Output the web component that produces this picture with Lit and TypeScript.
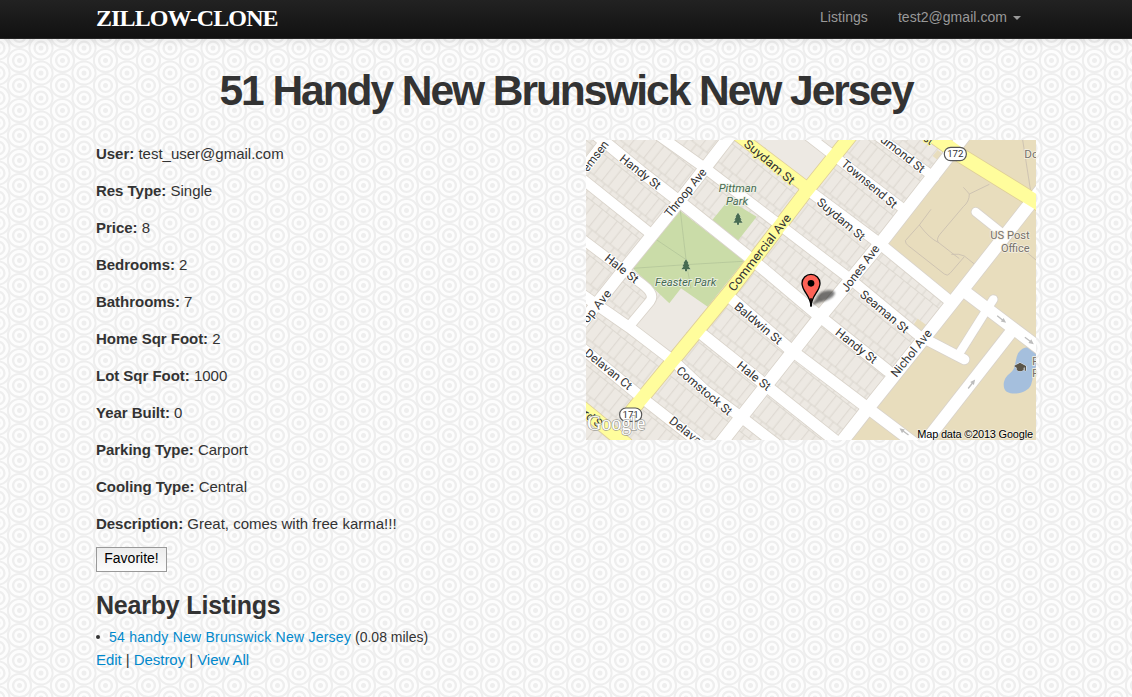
import { LitElement, html, svg, css } from "lit";
import { customElement } from "lit/decorators.js";

type Label = [string, number, number, number, number, string?];

// Street geometry on a 1350 x 900 canvas: [path, width, colour]
const streets: [string, number, string][] = [
  ["M70,-20 L-20,98", 24, "#fff"],
  ["M430,-10 L257,213 L117,385 L-10,545", 36, "#fff"],
  ["M1133,-10 L885,308 L705,527 L540,737 L400,915", 38, "#fff"],
  ["M1370,143 L1125,455 L1030,575 L850,800 L762,912", 38, "#fff"],
  ["M1272,580 L1010,915", 36, "#fff"],
  ["M1222,478 L1120,640", 25, "#fff"],
  ["M650,-25 L752,54 L950,205", 28, "#fff"],
  ["M850,-30 L1045,112", 28, "#fff"],
  ["M655,142 L870,302 L1090,482", 32, "#fff"],
  ["M1130,450 L1370,632", 36, "#fff"],
  ["M210,-20 L365,90 L590,262 L790,415 L1000,588 L1135,658", 30, "#fff"],
  ["M25,-20 L165,95 L290,192 L490,352 L690,520 L905,692", 34, "#fff"],
  ["M-10,118 L190,278", 30, "#fff"],
  ["M430,470 L610,626 L840,800 L985,910", 34, "#fff"],
  ["M-10,298 L105,385 L168,432 Q208,462 192,484 L132,556", 28, "#fff"],
  ["M345,580 L505,708 L550,745 L760,912", 34, "#fff"],
  ["M-10,465 L130,562 L265,665 L355,750 L470,835 L570,912", 32, "#fff"],
  ["M-10,626 L170,775 L345,912", 32, "#fff"],
  ["M1169,216 L1262,290", 25, "#fff"],
  ["M445,-22 L665,145", 34, "#fffd9c"],
  ["M800,-20 L660,155 L437,447 L135,815", 39, "#fffd9c"],
  ["M-20,797 L120,912", 40, "#fffd9c"],
  ["M1000,-42 L1130,50 L1370,198", 42, "#fffd9c"],
];

const labels: Label[] = [
  ["emsen", 28, 48, -52, 106],
  ["Handy St", 163, 96, 38, 145],
  ["Throop Ave", 299, 158, -51, 176],
  ["Suydam St", 550, 66, 40, 186],
  ["Townsend St", 850, 132, 40, 205],
  ["dmond St", 950, 42, 38, 158],
  ["Suydam St", 765, 238, 40, 176],
  ["Commercial Ave", 521, 338, -52, 282],
  ["Jones Ave", 823, 385, -53, 166],
  ["Seaman St", 895, 515, 40, 178],
  ["Handy St", 811, 618, 38, 147],
  ["Nichol Ave", 976, 640, -51, 172],
  ["Hale St", 107, 386, 38, 118],
  ["op Ave", 32, 499, -51, 116],
  ["Baldwin St", 517, 550, 40, 175],
  ["Hale St", 504, 708, 38, 118],
  ["Comstock St", 355, 753, 40, 206],
  ["Delavan Ct", 67, 688, 39, 172],
  ["Delava", 298, 872, 38, 112],
  ["rd S", 20, 836, 38, 62],
  ["st", 1028, -2, 34, 26],
];

const parcels = [
  "M1210,133 L1150,162 Q1140,150 1132,142 M1150,162 Q1150,185 1132,200 L1060,285 Q1050,300 1058,308",
  "M1035,208 L1000,255 L958,302 Q958,312 968,318 L1075,402 Q1084,410 1092,400 L1135,350 M1000,255 Q1030,295 1058,308 L1120,356 M1096,343 Q1120,340 1135,348 L1165,372",
  "M1310,0 L1335,160 M1290,310 L1350,360",
];

@customElement("street-map")
class StreetMap extends LitElement {
  static styles = css`
    :host { display: block; width: 450px; height: 300px; }
    svg { display: block; width: 100%; height: 100%; }
    .street { font-family: Roboto, sans-serif; font-size: 36px; fill: #333; stroke: #fff; stroke-width: 6px; stroke-linejoin: round; paint-order: stroke; text-anchor: middle; }
    .onyellow { stroke: #fffd9c; }
    .park { font-family: Roboto, sans-serif; font-style: italic; font-size: 35px; fill: #476b52; stroke: #eef2e6; stroke-width: 5px; paint-order: stroke; text-anchor: middle; }
    .place { font-family: Roboto, sans-serif; font-size: 35px; fill: #77726b; stroke: #f5f0e3; stroke-width: 5px; paint-order: stroke; text-anchor: end; }
    .shield { font-family: Roboto, sans-serif; font-size: 29px; fill: #333; text-anchor: middle; }
    .logo { font-family: "Liberation Serif", serif; font-size: 60px; fill: #fff; stroke: #8b8b85; stroke-opacity: .8; stroke-width: 4px; paint-order: stroke; }
    .credit { font-family: "Liberation Sans", sans-serif; font-size: 33px; fill: #000; stroke: #fff; stroke-opacity: .5; stroke-width: 5px; paint-order: stroke; text-anchor: end; }
  `;

  private road([d, w, c]: [string, number, string]) {
    return svg`<path d=${d} stroke=${c} stroke-width=${w} />`;
  }
  private casing([d, w, c]: [string, number, string]) {
    return svg`<path d=${d} stroke=${c === "#fff" ? "#d9d3ca" : "#dfcf9a"} stroke-width=${w + 5} />`;
  }
  private label([t, x, y, a, len]: Label) {
    const yellow = (t === "Suydam St" && y < 100) || t === "Commercial Ave" || t === "rd S" || t === "st";
    return svg`<text class=${yellow ? "street onyellow" : "street"} transform="translate(${x} ${y}) rotate(${a})" y="12" textLength=${len} lengthAdjust="spacingAndGlyphs">${t}</text>`;
  }
  private tree(x: number, y: number) {
    return svg`<path transform="translate(${x} ${y})" fill="#476b52" stroke="#dfe9cd" stroke-width="2" paint-order="stroke" d="M0,-18 L8,-6 H5 L11,3 H7 L14,12 H3 V18 H-3 V12 H-14 L-7,3 H-11 L-5,-6 H-8 Z" />`;
  }
  private arrow(x: number, y: number, a: number) {
    return svg`<path transform="translate(${x} ${y}) rotate(${a})" fill="#bdbdbd" d="M-17,-2 H2 V-7 L17,0 L2,7 V2 H-17 Z" />`;
  }

  render() {
    return html`<svg viewBox="0 0 1350 900" role="img" aria-label="Map">
      <defs>
        <pattern id="lots" width="56" height="132" patternUnits="userSpaceOnUse" patternTransform="translate(40 34) rotate(38.5)">
          <path d="M5,0 V66 M30,0 V66 M18,66 V132 M47,66 V132 M0,66 H56 M0,131 H56" fill="none" stroke="#d8d3cb" stroke-width="2.6" />
        </pattern>
        <filter id="soft"><feGaussianBlur stdDeviation="2.5" /></filter>
      </defs>
      <rect width="1350" height="900" fill="#ede9e3" />
      <rect width="1350" height="900" fill="url(#lots)" />
      <path fill="#ede9e3" d="M500,-10 H780 L665,130 Z M285,445 L365,498 L250,640 L145,560 L212,480 Z" />
      <path fill="#e8ddbd" d="M1125,0 H1350 V900 H762 L1090,482 L885,308 Z M1055,30 L1078,48 L1062,66 L1040,48 Z M995,536 L1022,556 L1005,580 L978,560 Z" />
      <path fill="#cadca8" d="M283,213 L475,362 L365,500 L285,445 L250,490 L140,385 Z M428,180 L512,230 L455,303 L377,242 Z" />
      <path fill="none" stroke="#b5c69a" stroke-width="2.5" d="M283,213 L302,375 L315,445 M205,295 L302,360 M140,385 L300,374 L470,364" />
      <g fill="none" stroke="#c9beb0" stroke-width="2.5">${parcels.map((d) => svg`<path d=${d} />`)}</g>
      <path fill="#a5bfdd" d="M1350,632 Q1318,608 1296,640 C1285,665 1292,685 1272,700 C1250,715 1248,745 1262,755 C1285,768 1325,758 1335,735 Q1342,715 1340,695 L1350,680 Z" />
      <g fill="none" stroke-linecap="round" stroke-linejoin="round">
        ${streets.map((s) => this.casing(s))}
        ${streets.map((s) => this.road(s))}
      </g>
      ${this.arrow(1247, 538, 38)} ${this.arrow(1330, 602, 38)} ${this.arrow(1157, 732, -52)} ${this.arrow(954, 875, 217)}
      ${labels.map((l) => this.label(l))}
      ${this.tree(456, 236)} ${this.tree(300, 376)}
      <text class="park" x="455" y="155" textLength="114" lengthAdjust="spacingAndGlyphs">Pittman</text>
      <text class="park" x="453" y="194" textLength="66" lengthAdjust="spacingAndGlyphs">Park</text>
      <text class="park" x="299" y="437" textLength="184" lengthAdjust="spacingAndGlyphs">Feaster Park</text>
      <text class="place" x="1331" y="296" textLength="118" lengthAdjust="spacingAndGlyphs">US Post</text>
      <text class="place" x="1331" y="335" textLength="86" lengthAdjust="spacingAndGlyphs">Office</text>
      <text class="place" x="1358" y="53">Do</text>
      <text class="place" x="1357" y="674">F</text>
      <text class="place" x="1357" y="710">F</text>
      <path fill="#5b5549" stroke="#e9eef3" stroke-width="3" paint-order="stroke" d="M1302,668 L1320,678 V692 H1316 V682 L1313,683 V690 Q1302,698 1292,690 V683 L1284,678 Z" />
      <g fill="#fff" stroke="#555" stroke-width="3.5">
        <rect x="1075" y="22" width="66" height="40" rx="19" />
        <rect x="101" y="804" width="66" height="40" rx="19" />
      </g>
      <text class="shield" x="1108" y="52">172</text>
      <text class="shield" x="134" y="834">171</text>
      <path fill="#222" fill-opacity=".6" filter="url(#soft)" d="M677,496 L698,463 C715,445 760,448 742,468 C730,482 705,484 677,496 Z" />
      <path fill="#fe6256" stroke="#000" stroke-width="4" d="M675,498 C673,465 648,455 648,430 A27,27 0 0 1 702,430 C702,455 677,465 675,498 Z" />
      <path fill="none" stroke="#000" stroke-width="5" d="M675,475 V500" />
      <circle cx="675" cy="430" r="10" fill="#000" />
      <text class="logo" x="4" y="869" textLength="174" lengthAdjust="spacingAndGlyphs">Google</text>
      <text class="credit" x="1341" y="894" textLength="347" lengthAdjust="spacing">Map data ©2013 Google</text>
    </svg>`;
  }
}

const facts: [string, string][] = [
  ["User:", "test_user@gmail.com"],
  ["Res Type:", "Single"],
  ["Price:", "8"],
  ["Bedrooms:", "2"],
  ["Bathrooms:", "7"],
  ["Home Sqr Foot:", "2"],
  ["Lot Sqr Foot:", "1000"],
  ["Year Built:", "0"],
  ["Parking Type:", "Carport"],
  ["Cooling Type:", "Central"],
  ["Description:", "Great, comes with free karma!!!"],
];

@customElement("app-root")
class AppRoot extends LitElement {
  static styles = css`
    :host {
      display: block; min-height: 697px; color: #333;
      font: 15px/27px "Liberation Sans", Arial, sans-serif;
      background: #fdfdfd url("data:image/svg+xml,%3Csvg xmlns='http://www.w3.org/2000/svg' xmlns:xlink='http://www.w3.org/1999/xlink' width='43' height='25'%3E%3Cdefs%3E%3Cg id='a' fill='none' stroke='%23eee'%3E%3Ccircle r='11.6' stroke-width='2'/%3E%3Ccircle r='6.4' stroke-width='2.4'/%3E%3Ccircle r='2.5' fill='%23eee' stroke='none'/%3E%3C/g%3E%3C/defs%3E%3Cuse xlink:href='%23a' x='19.5' y='10.5'/%3E%3Cuse xlink:href='%23a' x='19.5' y='35.5'/%3E%3Cuse xlink:href='%23a' x='19.5' y='-14.5'/%3E%3Cuse xlink:href='%23a' x='41' y='-2'/%3E%3Cuse xlink:href='%23a' x='41' y='23'/%3E%3Cuse xlink:href='%23a' x='-2' y='-2'/%3E%3Cuse xlink:href='%23a' x='-2' y='23'/%3E%3C/svg%3E");
    }
    .navbar { height: 38px; background: linear-gradient(#222, #111); border-bottom: 1px solid #252525; box-shadow: 0 1px 10px rgba(0,0,0,.1); }
    .container { width: 940px; margin: 0 auto; }
    .bar { display: flex; justify-content: space-between; align-items: center; height: 37px; }
    .brand { font: bold 24px/37px "Liberation Serif", serif; letter-spacing: -.9px; color: #fff; white-space: nowrap; }
    .links { display: flex; gap: 30px; padding: 0 15px 2px 0; font-size: 14px; line-height: 35px; color: #999; letter-spacing: .05px; }
    .user { display: flex; align-items: center; gap: 6px; }
    .caret { border: 4px solid transparent; border-top-color: #999; border-bottom: 0; }
    h1 { margin: 0; padding-top: 30px; height: 71px; font-size: 42.5px; line-height: 44px; letter-spacing: -2.05px; text-align: center; white-space: nowrap; }
    .row { display: flex; gap: 40px; }
    .info { width: 450px; }
    p { margin: 0 0 10px; white-space: nowrap; }
    b { letter-spacing: -.03px; }
    button { display: block; width: 71px; height: 25px; padding: 0 0 2px; border: 1px solid #999; border-radius: 0; background: linear-gradient(#ececec, #fcfcfc); color: #000; font: 14px/21px "Liberation Sans", sans-serif; }
    h3 { margin: 0; padding-top: 13px; font-size: 25px; line-height: 40px; letter-spacing: -.2px; }
    .near { display: flex; align-items: center; gap: 9px; height: 24px; font-size: 14px; line-height: 24px; white-space: nowrap; }
    .near a { letter-spacing: .24px; }
    .dot { width: 4px; height: 4px; border-radius: 50%; background: #333; }
    .actions { font-size: 15px; line-height: 22px; letter-spacing: -.05px; white-space: nowrap; }
    a { color: #08c; text-decoration: none; }
  `;

  render() {
    return html`
      <div class="navbar"><div class="container bar">
        <span class="brand">ZILLOW-CLONE</span>
        <div class="links"><span>Listings</span><span class="user">test2@gmail.com<i class="caret"></i></span></div>
      </div></div>
      <div class="container">
        <h1>51 Handy New Brunswick New Jersey</h1>
        <div class="row">
          <div class="info">
            ${facts.map(([k, v]) => html`<p><b>${k}</b> <span>${v}</span></p>`)}
            <button>Favorite!</button>
            <h3>Nearby Listings</h3>
            <div class="near"><i class="dot"></i><span><a href="#">54 handy New Brunswick New Jersey</a> (0.08 miles)</span></div>
            <div class="actions"><a href="#">Edit</a> | <a href="#">Destroy</a> | <a href="#">View All</a></div>
          </div>
          <street-map></street-map>
        </div>
      </div>`;
  }
}
